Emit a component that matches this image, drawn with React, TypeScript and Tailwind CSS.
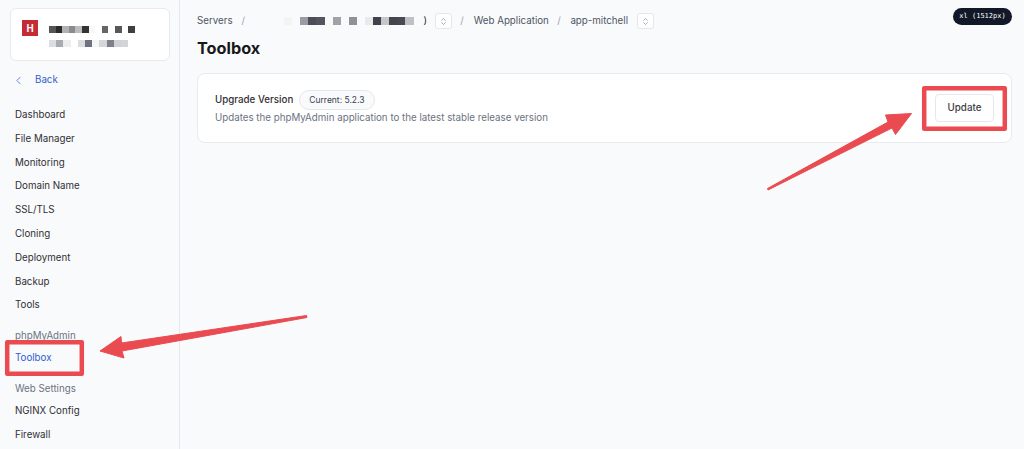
import React from 'react';
import { ChevronLeft, ChevronsUpDown } from 'lucide-react';

const mainLinks = ['Dashboard', 'File Manager', 'Monitoring', 'Domain Name', 'SSL/TLS', 'Cloning', 'Deployment', 'Backup', 'Tools'];

// pixelated, redacted text
const nameBlocks = ['#555558', '#2b2b2e', '#b2b2b4', '#8b8b8d', '#bcbcbe', '#333336', '#f8f8f8', '#ffffff', '#666669', '#ffffff', '#58585b', '#ffffff', '#404043'];
const mailBlocks = ['#dcdde0', '#a9abb3', '#eceded', '#ffffff', '#dcdde1', '#6f7280', '#f6f6f7', '#d5d6da', '#7d808c', '#d0d1d6', '#d3d4d8'];
const crumbBlocks = ['#f3f4f6', '#f9fafb', '#9a9ca3', '#4b4e57', '#54565f', '#f9fafb', '#a0a2a8', '#f9fafb', '#8f9197', '#f9fafb', '#e9eaec', '#3f424c', '#c6c7cb', '#43464f', '#474a53', '#bfc0c4'];

function Blocks({ colors, size, height }: { colors: string[]; size: string; height: string }) {
  return (
    <div className={`flex ${height}`}>
      {colors.map((color, i) => (
        <div key={i} className={size} style={{ backgroundColor: color }} />
      ))}
    </div>
  );
}

function NavLink({ label, active }: { label: string; active?: boolean }) {
  return <div className={`h-[23.8px] leading-[23.8px] ${active ? 'text-[#2f5fd0]' : 'text-[#2f2f33]'}`}>{label}</div>;
}

function Switcher() {
  return (
    <div className="flex h-[16px] w-[17px] items-center justify-center rounded-[3px] border border-[#e5e7eb] bg-white">
      <ChevronsUpDown className="h-[9px] w-[9px] text-[#6b7280]" strokeWidth={1.5} />
    </div>
  );
}

function Slash() {
  return <span className="text-[#9ca3af]">/</span>;
}

export default function App() {
  return (
    <div className="relative flex h-[449px] w-[1024px] overflow-hidden bg-[#f9fafb] font-['Inter',sans-serif] text-[9.75px]">
      <aside className="h-full w-[180px] shrink-0 border-r border-[#e5e7eb] pl-[10px] pr-[9px] pt-[8px]">
        <div className="flex h-[53px] gap-[11px] rounded-[6px] border border-[#e9eaee] bg-white pl-[11px] pt-[11px]">
          <div className="flex h-[16px] w-[16px] items-center justify-center bg-[#c42b35] font-['Liberation_Sans',sans-serif] text-[10px] font-bold text-white">H</div>
          <div className="flex flex-col gap-[7px] pt-[6px]">
            <Blocks colors={nameBlocks} size="w-[6.6px]" height="h-[7px]" />
            <Blocks colors={mailBlocks} size="w-[7.2px]" height="h-[7px]" />
          </div>
        </div>
        <div className="mt-[10px] flex h-[18px] items-center text-[#2f5fd0]">
          <ChevronLeft className="ml-[2px] h-[13px] w-[13px] text-[#5b80e0]" strokeWidth={1.75} />
          <span className="ml-[10px]">Back</span>
        </div>
        <nav className="mt-[14px] pl-[5px]">
          {mainLinks.map((label) => (
            <NavLink key={label} label={label} />
          ))}
          <div className="mt-[9px] h-[20px] leading-[20px] text-[#6b7280]">phpMyAdmin</div>
          <NavLink label="Toolbox" active />
          <div className="mt-[9px] h-[20px] leading-[20px] text-[#6b7280]">Web Settings</div>
          <NavLink label="NGINX Config" />
          <NavLink label="Firewall" />
        </nav>
      </aside>

      <main className="min-w-0 flex-1 pl-[17px] pr-[12px]">
        <div className="mt-[13px] flex h-[16px] items-center text-[#4b5563]">
          <span>Servers</span>
          <span className="ml-[9px]"><Slash /></span>
          <div className="ml-[39px]">
            <Blocks colors={crumbBlocks} size="w-[8.1px]" height="h-[8px]" />
          </div>
          <span className="ml-[10px] text-[#27272a]">)</span>
          <div className="ml-[8px]"><Switcher /></div>
          <span className="ml-[8px]"><Slash /></span>
          <span className="ml-[10px]">Web Application</span>
          <span className="ml-[8.5px]"><Slash /></span>
          <span className="ml-[9.5px]">app-mitchell</span>
          <div className="ml-[8.5px]"><Switcher /></div>
        </div>
        <h1 className="mt-[3px] h-[32px] text-[16.25px] font-bold leading-[32px] text-[#18181b]">Toolbox</h1>
        <section className="mt-[9px] flex h-[70px] items-center justify-between rounded-[8px] border border-[#e9eaee] bg-white px-[17px]">
          <div>
            <div className="flex items-center gap-[5.5px]">
              <span className="font-medium text-[#2f2f33]">Upgrade Version</span>
              <span className="flex h-[20px] items-center rounded-full border border-[#e5e7eb] bg-[#f9fafb] px-[9.5px] text-[8.5px] text-[#374151]">Current: 5.2.3</span>
            </div>
            <p className="mt-[1px] text-[#6b7280]">Updates the phpMyAdmin application to the latest stable release version</p>
          </div>
          <button className="h-[28px] w-[59px] rounded-[4px] border border-[#e5e7eb] bg-white font-medium text-[#3a3a3f]">Update</button>
        </section>
      </main>

      <div className="absolute right-[12px] top-[8px] flex h-[17px] w-[59px] items-center justify-center rounded-full bg-[#111827] font-['DejaVu_Sans_Mono',monospace] text-[7px] text-white">xl (1512px)</div>

      {/* annotation overlay */}
      <svg className="pointer-events-none absolute left-0 top-0" width="1024" height="449" viewBox="0 0 1024 449">
        <g fill="none" stroke="#e94b50" strokeWidth="4.5" strokeLinejoin="round">
          <rect x="7.2" y="342.2" width="74.6" height="31.6" />
          <rect x="924.2" y="88.2" width="80.6" height="40.6" />
        </g>
        <g fill="#e94b50" stroke="#e94b50" strokeWidth="1" strokeLinejoin="round">
          <path d="M306.5 315.5 L307 317.5 L122 351 L124 358 L100 351 L121 336.5 L121.5 343 Z" />
          <path d="M768 190 L767.5 188.5 L888 122 L885.5 115 L911.5 113.5 L895.5 134.5 L892 128 Z" />
        </g>
      </svg>
    </div>
  );
}
